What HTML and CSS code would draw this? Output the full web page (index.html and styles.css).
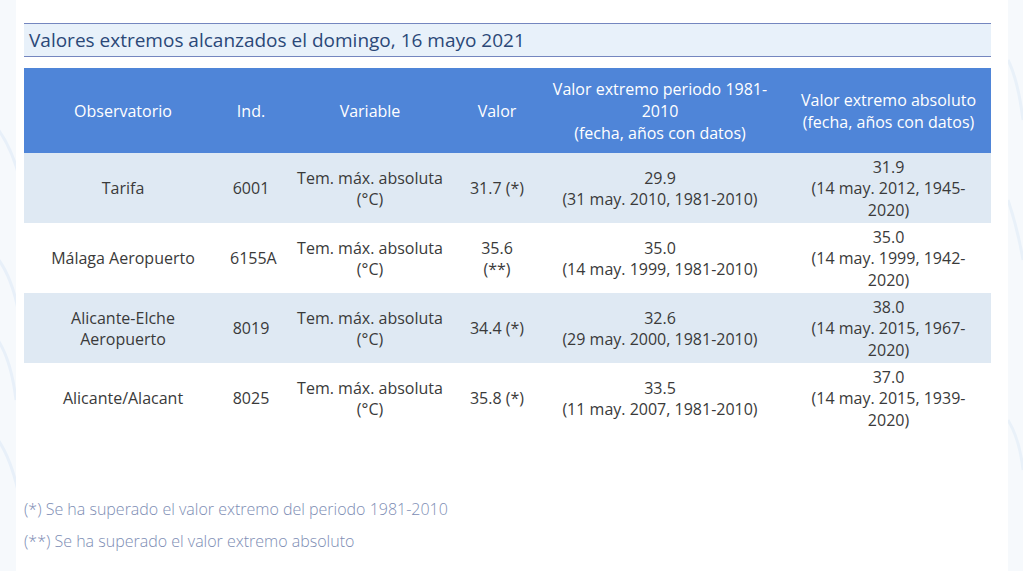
FILE: index.html
```html
<!DOCTYPE html>
<html lang="es">
<head>
<meta charset="utf-8">
<title>Valores extremos</title>
<link rel="stylesheet" href="styles.css">
</head>
<body>
<div class="bg-left">
  <svg width="20" height="571" viewBox="0 0 20 571">
    <g fill="none" stroke="#e8f0f9" stroke-width="3">
      <path d="M-10 120 Q10 140 20 180"/>
      <path d="M-10 250 Q12 270 20 320"/>
      <path d="M-10 330 Q10 350 16 400"/>
      <path d="M-10 430 Q10 450 20 500"/>
    </g>
  </svg>
</div>
<div class="bg-right">
  <svg width="15" height="571" viewBox="0 0 15 571">
    <g fill="none" stroke="#e9f1f9" stroke-width="3">
      <path d="M0 60 Q10 80 15 120"/>
      <path d="M0 200 Q10 230 15 260"/>
      <path d="M0 420 Q12 440 15 470"/>
    </g>
  </svg>
</div>
<main class="page">
  <h2 class="title">Valores extremos alcanzados el domingo, 16 mayo 2021</h2>
  <table class="data">
    <colgroup>
      <col class="c1"><col class="c2"><col class="c3"><col class="c4"><col class="c5"><col class="c6">
    </colgroup>
    <thead>
      <tr>
        <th>Observatorio</th>
        <th>Ind.</th>
        <th>Variable</th>
        <th>Valor</th>
        <th>Valor extremo periodo 1981-2010<br>(fecha, años con datos)</th>
        <th>Valor extremo absoluto<br>(fecha, años con datos)</th>
      </tr>
    </thead>
    <tbody>
      <tr>
        <td>Tarifa</td>
        <td>6001</td>
        <td>Tem. máx. absoluta (°C)</td>
        <td>31.7 (*)</td>
        <td>29.9<br>(31 may. 2010, 1981-2010)</td>
        <td>31.9<br>(14 may. 2012, 1945-2020)</td>
      </tr>
      <tr>
        <td>Málaga Aeropuerto</td>
        <td>6155A</td>
        <td>Tem. máx. absoluta (°C)</td>
        <td>35.6 (**)</td>
        <td>35.0<br>(14 may. 1999, 1981-2010)</td>
        <td>35.0<br>(14 may. 1999, 1942-2020)</td>
      </tr>
      <tr>
        <td>Alicante-Elche Aeropuerto</td>
        <td>8019</td>
        <td>Tem. máx. absoluta (°C)</td>
        <td>34.4 (*)</td>
        <td>32.6<br>(29 may. 2000, 1981-2010)</td>
        <td>38.0<br>(14 may. 2015, 1967-2020)</td>
      </tr>
      <tr>
        <td>Alicante/Alacant</td>
        <td>8025</td>
        <td>Tem. máx. absoluta (°C)</td>
        <td>35.8 (*)</td>
        <td>33.5<br>(11 may. 2007, 1981-2010)</td>
        <td>37.0<br>(14 may. 2015, 1939-2020)</td>
      </tr>
    </tbody>
  </table>
  <p class="note first">(*) Se ha superado el valor extremo del periodo 1981-2010</p>
  <p class="note">(**) Se ha superado el valor extremo absoluto</p>
</main>
</body>
</html>
```

FILE: styles.css
```css
html, body {
  margin: 0;
  padding: 0;
}
body {
  background: #f6f9fc;
  font-family: "Open Sans", "Liberation Sans", sans-serif;
  color: #333;
  width: 1023px;
  height: 571px;
  overflow: hidden;
  position: relative;
}
.bg-left {
  position: absolute;
  left: 0;
  top: 0;
}
.bg-right {
  position: absolute;
  right: 0;
  top: 0;
}
.page {
  background: #ffffff;
  margin-left: 16px;
  width: 992px;
  height: 571px;
  box-sizing: border-box;
  padding: 23px 17px 0 8px;
  position: relative;
}
.title {
  margin: 0;
  height: 34px;
  box-sizing: border-box;
  border-top: 1px solid #7486bf;
  border-bottom: 1px solid #7486bf;
  background: #e8f1fa;
  color: #2b4878;
  font-size: 19px;
  font-weight: 500;
  line-height: 32px;
  padding-left: 5px;
}
.data {
  margin-top: 11px;
  width: 967px;
  border-collapse: collapse;
  table-layout: fixed;
  font-size: 16px;
}
.c1 { width: 198px; }
.c2 { width: 58px; }
.c3 { width: 180px; }
.c4 { width: 74px; }
.c5 { width: 252px; }
.c6 { width: 205px; }
.data th {
  background: #4f85d8;
  color: #ffffff;
  font-weight: 400;
  height: 85px;
  box-sizing: border-box;
  line-height: 22px;
  padding: 1px 10px 0;
  text-align: center;
  vertical-align: middle;
}
.data td {
  height: 70px;
  box-sizing: border-box;
  line-height: 21.5px;
  padding: 2px 8px 0;
  text-align: center;
  vertical-align: middle;
  color: #3a3a3a;
}
.data tbody tr:nth-child(odd) td {
  background: #dfe9f3;
}
.data th:nth-child(6),
.data td:nth-child(6) {
  padding-left: 12px;
  padding-right: 12px;
}
.note {
  margin: 0;
  font-size: 16px;
  font-weight: 300;
  color: #7d8db4;
  line-height: 20px;
}
.note.first {
  margin-top: 66px;
}
.note + .note {
  margin-top: 12px;
}
```
